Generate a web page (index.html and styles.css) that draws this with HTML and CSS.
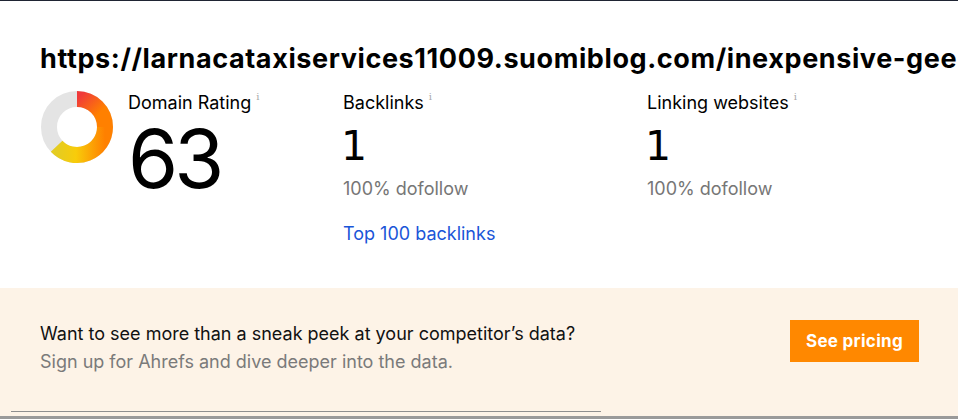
FILE: index.html
```html
<!DOCTYPE html>
<html>
<head>
<meta charset="utf-8">
<link rel="stylesheet" href="styles.css">
</head>
<body>
<div class="topline"></div>
<main class="card">
  <h1 class="url">https://larnacataxiservices11009.suomiblog.com/inexpensive-gee</h1>
  <div class="metrics">
    <div class="metric dr">
      <svg class="donut" width="74" height="74" viewBox="0 0 74 74">
        <defs>
          <linearGradient id="g1" x1="0" y1="0" x2="1" y2="1">
            <stop offset="0" stop-color="#f03a3a"/>
            <stop offset="0.65" stop-color="#ff8000"/>
          </linearGradient>
          <linearGradient id="g2" x1="1" y1="0" x2="0" y2="0">
            <stop offset="0" stop-color="#ff8000"/>
            <stop offset="0.6" stop-color="#f8cc0a"/>
            <stop offset="1" stop-color="#e4cc22"/>
          </linearGradient>
        </defs>
        <circle cx="37" cy="37" r="28" fill="none" stroke="#e4e4e4" stroke-width="16"/>
        <path d="M37 9 A28 28 0 0 1 65 37" fill="none" stroke="url(#g1)" stroke-width="16"/>
        <path d="M65 37 A28 28 0 0 1 16.6 56.2" fill="none" stroke="url(#g2)" stroke-width="16"/>
      </svg>
      <div class="dr-text">
        <div class="label">Domain Rating<sup class="i">i</sup></div>
        <div class="big">63</div>
      </div>
    </div>
    <div class="metric col">
      <div class="label">Backlinks<sup class="i">i</sup></div>
      <div class="num">1</div>
      <div class="sub">100% dofollow</div>
      <a class="link" href="#">Top 100 backlinks</a>
    </div>
    <div class="metric col">
      <div class="label">Linking websites<sup class="i">i</sup></div>
      <div class="num">1</div>
      <div class="sub">100% dofollow</div>
    </div>
  </div>
</main>
<section class="promo">
  <div class="promo-text">
    <p class="promo-title">Want to see more than a sneak peek at your competitor’s data?</p>
    <p class="promo-sub">Sign up for Ahrefs and dive deeper into the data.</p>
  </div>
  <a class="btn" href="#">See pricing</a>
  <div class="promo-rule"></div>
</section>
<div class="bottombar"></div>
</body>
</html>
```
FILE: styles.css
```css
* { box-sizing: border-box; }
html, body { margin: 0; padding: 0; }
body {
  width: 958px;
  height: 419px;
  overflow: hidden;
  background: #fff;
  font-family: "Inter", "Liberation Sans", sans-serif;
  color: #000;
}
.topline {
  height: 1px;
  background: #1f2433;
}
.card {
  padding: 42px 0 0 40px;
  height: 287px;
}
.url {
  margin: 0;
  font-size: 27px;
  font-weight: 700;
  line-height: 32px;
  white-space: nowrap;
  overflow: hidden;
  letter-spacing: 0.6px;
}
.metrics {
  display: flex;
  align-items: flex-start;
  margin-top: 17px;
}
.metric.dr {
  display: flex;
  width: 303px;
}
.donut {
  margin-top: -2px;
  flex: none;
}
.dr-text {
  margin-left: 14px;
}
.label {
  font-size: 18px;
  line-height: 22px;
  font-weight: 400;
  color: #000;
}
.i {
  font-size: 10px;
  color: #aaa;
  font-family: "DejaVu Serif", serif;
  margin-left: 5px;
  vertical-align: 9px;
  line-height: 0;
}
.big {
  font-size: 81px;
  line-height: 62px;
  font-weight: 400;
  letter-spacing: -4px;
  margin-top: 14px;
}
.metric.col {
  width: 304px;
  display: flex;
  flex-direction: column;
}
.num {
  font-family: "DejaVu Sans", sans-serif;
  font-size: 41px;
  line-height: 44px;
  margin-top: 10px;
  margin-left: -2px;
}
.sub {
  font-size: 18px;
  line-height: 22px;
  color: #767676;
  margin-top: 10px;
}
.link {
  margin-top: 23px;
  font-size: 18px;
  line-height: 22px;
  color: #1a55d8;
  text-decoration: none;
}
.promo {
  position: relative;
  background: #fdf3e7;
  height: 128px;
  display: flex;
  align-items: flex-start;
  justify-content: space-between;
  padding: 32px 39px 0 40px;
}
.promo-text p { margin: 0; font-size: 18px; line-height: 28px; }
.promo-title { color: #111; }
.promo-sub { color: #7a7a7a; }
.btn {
  background: #ff8800;
  color: #fff;
  font-weight: 700;
  font-size: 17px;
  letter-spacing: 0.3px;
  width: 129px;
  height: 42px;
  display: flex;
  align-items: center;
  justify-content: center;
  text-decoration: none;
}
.promo-rule {
  position: absolute;
  left: 11px;
  width: 590px;
  bottom: 4px;
  height: 1px;
  background: #8f8f8f;
}
.bottombar {
  height: 4px;
  background: #9a9a9a;
}
```
